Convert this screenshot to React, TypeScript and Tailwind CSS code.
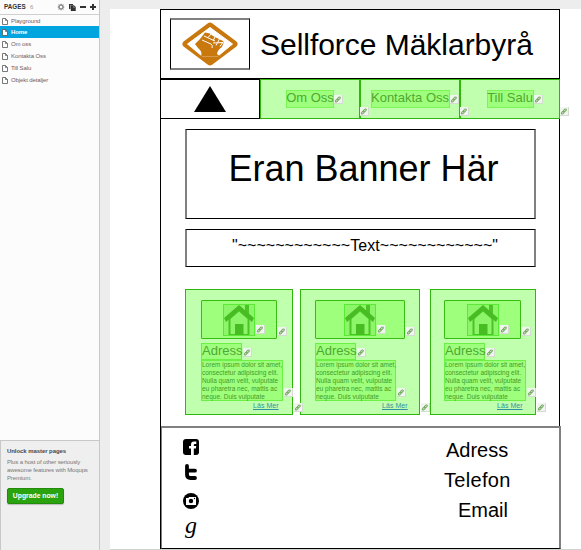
import type { ReactNode } from 'react';

function LinkBadge({ className }: { className: string }) {
  return (
    <span className={`absolute z-10 flex h-[9px] w-[9px] items-center justify-center border-r border-b border-[#d4dcd0] bg-[#f1f5ef] ${className}`}>
      <svg viewBox="0 0 9 9" className="h-[9px] w-[9px]" fill="none" stroke="#74ab60" strokeWidth="1.2">
        <rect x="-1.9" y="-.9" width="3.8" height="1.8" rx=".9" transform="translate(3.1 5.7) rotate(-45)" />
        <rect x="-1.9" y="-.9" width="3.8" height="1.8" rx=".9" transform="translate(5.5 3.3) rotate(-45)" />
      </svg>
    </span>
  );
}

function PageIcon() {
  return (
    <svg viewBox="0 0 6 7" className="h-[7px] w-[6px] shrink-0">
      <path d="M.5.5H3.5L5.5 2.5V6.5H.5Z" fill="#fff" stroke="#555" strokeWidth=".8" />
      <path d="M3.5.5V2.5H5.5" fill="none" stroke="#555" strokeWidth=".7" />
    </svg>
  );
}

const pages = ['Playground', 'Home', 'Om oss', 'Kontakta Oss', 'Till Salu', 'Objekt detaljer'];

function Sidebar() {
  return (
    <aside className="flex h-[550px] w-[100px] shrink-0 flex-col border-r border-[#c8c8c8] bg-[#fcfcfc]">
      <div className="flex h-[15px] items-center border-b border-[#cfcfcf] pl-1 text-[6px] text-[#333]">
        <span className="w-[26px] text-[6.3px] font-bold">PAGES</span>
        <span className="w-[27px] text-[#999]">6</span>
        <svg viewBox="0 0 8 8" className="h-2 w-2" fill="none" stroke="#8c8c8c">
          <circle cx="4" cy="4" r="2" strokeWidth="1.5" />
          <path d="M4 .7V2M4 6V7.3M.7 4H2M6 4H7.3M1.6 1.6 2.5 2.5M5.5 5.5 6.4 6.4M6.4 1.6 5.5 2.5M2.5 5.5 1.6 6.4" strokeWidth="1" />
        </svg>
        <svg viewBox="0 0 7 7" className="ml-[4px] h-[7px] w-[7px]" fill="#333">
          <path d="M0 0H4V1H1.5V5H0Z" />
          <path d="M2 1.5H5L6.5 3V7H2Z" stroke="#222" strokeWidth=".4" />
          <path d="M4.5 2V3.5H6" stroke="#aaa" strokeWidth=".5" fill="none" />
        </svg>
        <span className="ml-[4px] h-[2px] w-[6px] bg-[#333]" />
        <svg viewBox="0 0 6 6" className="ml-[4px] h-[6px] w-[6px]" stroke="#333" strokeWidth="2">
          <path d="M3 0V6M0 3H6" />
        </svg>
      </div>
      <nav className="flex flex-col">
        {pages.map((page) => (
          <div
            key={page}
            className={`flex h-[12px] items-center gap-[3px] pl-[2px] text-[6px] tracking-[-0.1px] ${page === 'Home' ? 'mt-[-1px] bg-[#00a5e0] font-bold text-white' : 'text-[#765a5a]'}`}
          >
            <PageIcon />
            <span>{page}</span>
          </div>
        ))}
      </nav>
      <section className="mt-auto h-[110px] border-t border-l border-[#c8c8c8] bg-[#efefef] pt-[6px] pl-[6px]">
        <h2 className="text-[6px] leading-[9px] font-bold tracking-[-0.07px] whitespace-nowrap text-[#48484f]">Unlock master pages</h2>
        <p className="mt-[2px] text-[6px] leading-[8px] tracking-[-0.13px] whitespace-nowrap text-[#777]">
          Plus a host of other seriously
          <br />
          awesome features with Moqups
          <br />
          Premium.
        </p>
        <button className="mt-[6px] flex h-4 w-[57px] items-center justify-center rounded-[2px] border border-[#228b0b] bg-[#2ba30f] text-[6.8px] font-bold whitespace-nowrap text-white shadow-[0_1px_1px_#bbb]">
          Upgrade now!
        </button>
      </section>
    </aside>
  );
}

function FistLogo() {
  return (
    <svg viewBox="0 0 56 44" className="h-[44px] w-[56px]">
      <path d="M28 4 52 22 28 40 4 22Z" fill="#c9780e" stroke="#c9780e" strokeWidth="7" strokeLinejoin="round" />
      <path d="M28 5.5 50.5 22 36 34H20L5.5 22Z" fill="#fff" stroke="#fff" strokeWidth="1" strokeLinejoin="round" />
      <path d="M13 22 18 17 23 10.5 28 11.5 31 14 42 19.5 40 25Q35.5 28 35 32L38 34.5H19Q21 30 16 26Z" fill="#c9780e" />
      <path d="M22 14 33 19M20 18 29 22M29 12 26 15.5M33 15 31 19M37.5 17 34 23.5M41.5 19.5 38 24.5M29 22Q31 23 30 26M31 21 41 20.5" fill="none" stroke="#fff" strokeWidth="1" />
    </svg>
  );
}

function NavCell({ label, width }: { label: string; width: string }) {
  return (
    <div className="relative flex h-10 w-[100px] justify-center border border-[#2fb80b] bg-[#c0ffad] pt-[10px]">
      <div className={`relative flex h-[18px] items-start justify-center border border-[#7df557] bg-[#9eff7d] text-[13px] leading-[13px] whitespace-nowrap text-[#4fa832] ${width}`}>
        {label}
        <LinkBadge className="top-[4px] -right-[10px]" />
      </div>
      <LinkBadge className="top-[27px] -right-[10px]" />
    </div>
  );
}

function House() {
  return (
    <svg viewBox="0 0 30 30" className="h-[30px] w-[30px]">
      <path d="M21 0H25V11L21 7Z" fill="#4cc427" />
      <path d="M4.5 13 15 3.5 25.5 13V30H4.5Z" fill="#4cc427" />
      <path d="M6.5 14 15 6.5 23.5 14V29H6.5Z" fill="#8cf569" />
      <path d="M15 0 30 13 28 17 15 5.5 2 17 0 13Z" fill="#48bd23" />
      <path d="M11 19H19.5V30H11Z" fill="#48bd23" />
    </svg>
  );
}

interface CardProps {
  width: string;
  pad: string;
  image: string;
  houseShift: string;
  textWidth: string;
  more: string;
}

function Card({ width, pad, image, houseShift, textWidth, more }: CardProps) {
  return (
    <article className={`relative h-[126px] border border-[#2fb80b] bg-[#c0ffad] pt-[10px] ${width} ${pad}`}>
      <div className={`relative h-[39px] rounded-[1px] border border-[#35bd10] bg-[#9eff7d] pt-[3px] ${image} ${houseShift}`}>
        <div className="relative h-8 w-8 border border-[#5ae935] bg-[#8cf569]">
          <House />
          <LinkBadge className="top-[20px] -right-[11px]" />
        </div>
        <LinkBadge className="top-[26px] -right-[11px]" />
      </div>
      <div className="relative mt-[4px] h-[17px] w-[41px] border border-[#6df045] bg-[#9eff7d] text-[13px] leading-[13px] text-[#4fa832]">
        Adress
        <LinkBadge className="top-[4px] -right-[11px]" />
      </div>
      <div className={`relative h-[41px] border border-[#6df045] bg-[#9eff7d] text-[6.5px] leading-[7.9px] whitespace-nowrap text-[#439b25] ${textWidth}`}>
        Lorem ipsum dolor sit amet,
        <br />
        consectetur adipiscing elit.
        <br />
        Nulla quam velit, vulputate
        <br />
        eu pharetra nec, mattis ac
        <br />
        neque. Duis vulputate
        <LinkBadge className="top-[27px] -right-[11px]" />
      </div>
      <div className={`text-[7px] leading-[9px] tracking-[0.05px] text-[#3192a0] underline ${more}`}>Läs Mer</div>
      <LinkBadge className="top-[113px] -right-[11px]" />
    </article>
  );
}

function SocialIcons() {
  return (
    <div className="flex w-4 flex-col items-center">
      <svg viewBox="0 0 16 16" className="h-4 w-4">
        <rect width="16" height="16" rx="3" />
        <path d="M8 16V9.5H6V7H8V5.5Q8 2.5 11 2.5H13.3V5H11.8Q10.8 5 10.8 6V7H13.2L12.9 9.5H10.8V16Z" fill="#fff" />
      </svg>
      <svg viewBox="0 0 12 16" className="mt-[9px] h-4 w-3">
        <path d="M2 2V10.5Q2 14 5.5 14H10M2 6.7H10" fill="none" stroke="#000" strokeWidth="3.8" strokeLinecap="round" />
      </svg>
      <svg viewBox="0 0 16 16" className="mt-[13px] h-4 w-4">
        <circle cx="8" cy="8" r="8" />
        <path d="M3 5H5.5L6 4H13V12H3Z" fill="#fff" />
        <circle cx="8" cy="8" r="2.2" />
        <circle cx="11.5" cy="5.5" r=".7" />
      </svg>
      <span className="mt-[5px] font-['Liberation_Serif',serif] text-[24px] leading-[22px] italic">g</span>
    </div>
  );
}

function Box({ className, children }: { className: string; children: ReactNode }) {
  return (
    <div className={`ml-[24px] flex w-[351px] justify-center border-x-2 border-y border-x-[#808080] border-y-black whitespace-nowrap ${className}`}>
      {children}
    </div>
  );
}

export default function App() {
  return (
    <div className="flex h-[550px] w-[581px] overflow-hidden bg-[#ededed] font-['Liberation_Sans',Arial,sans-serif] text-black">
      <Sidebar />
      <main className="mt-[9px] ml-[10px] h-[541px] flex-1 border-b border-[#d2d2d2] bg-white pl-[50px]">
        <header className="flex h-[70px] w-[400px] border border-black pt-[8px] pl-[9px]">
          <div className="flex h-[52px] w-20 items-center justify-center border-x border-y-2 border-x-black border-y-[#808080]">
            <FistLogo />
          </div>
          <h1 className="ml-[10px] pt-[10px] text-[30px] leading-[34px] tracking-[-0.03px] whitespace-nowrap">Sellforce Mäklarbyrå</h1>
        </header>
        <nav className="flex w-[400px]">
          <div className="flex h-10 w-[100px] justify-center border border-black pt-[6px]">
            <svg viewBox="0 0 32 26" className="h-[26px] w-8">
              <path d="M16 0 32 26H0Z" />
            </svg>
          </div>
          <NavCell label="Om Oss" width="w-12" />
          <NavCell label="Kontakta Oss" width="w-[79px]" />
          <NavCell label="Till Salu" width="w-[47px]" />
        </nav>
        <div className="h-[307px] w-[400px] border-x border-black pt-[10px]">
          <Box className="h-[90px] pt-[18px] text-[36px] leading-[41px]">
            <span className="ml-[6px]">Eran Banner Här</span>
          </Box>
          <Box className="mt-[10px] h-[38px] pt-[6px] text-[16px] leading-[19px]">
            <span className="ml-[9px] tracking-[0.04px]">"~~~~~~~~~~~~Text~~~~~~~~~~~~"</span>
          </Box>
          <div className="mt-[22px] ml-[24px] flex">
            <Card width="w-[108px]" pad="pl-[15px]" image="w-[76px]" houseShift="pl-[21px]" textWidth="w-[82px]" more="pl-[52px]" />
            <div className="w-[7px]" />
            <Card width="w-[120px]" pad="pl-[14px]" image="w-[90px]" houseShift="pl-[28px]" textWidth="w-[81px]" more="pl-[67px]" />
            <div className="w-[10px]" />
            <Card width="w-[106px]" pad="pl-[13px]" image="w-[77px]" houseShift="pl-[22px]" textWidth="w-[82px]" more="pl-[53px]" />
          </div>
        </div>
        <footer className="flex h-[123px] w-[401px] border-l border-black">
          <div className="flex h-full w-[400px] border-t-2 border-r-2 border-b border-l border-t-[#808080] border-r-[#808080] border-b-black border-l-[#808080] pt-[11px] pl-[21px]">
            <SocialIcons />
            <address className="ml-[245px] text-[20px] leading-[30px] whitespace-nowrap not-italic">
              <div className="mt-[-4px] pl-[2px]">Adress</div>
              <div className="tracking-[0.3px]">Telefon</div>
              <div className="pl-[14px]">Email</div>
            </address>
          </div>
        </footer>
      </main>
    </div>
  );
}
